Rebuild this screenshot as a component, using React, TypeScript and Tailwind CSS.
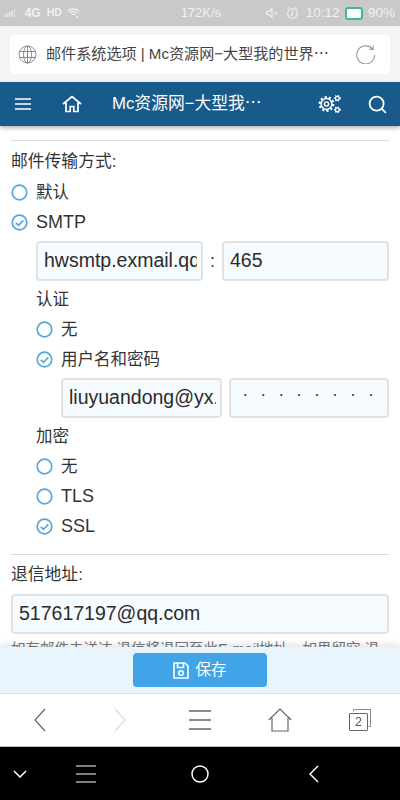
import React from 'react';
import { Search } from 'lucide-react';

const cjk = '"Liberation Sans", "Noto Sans CJK SC", sans-serif';

const Radio = ({ checked }: { checked?: boolean }) => (
  <svg width="17" height="17" viewBox="0 0 17 17" fill="none" className="shrink-0">
    <circle cx="8.5" cy="8.5" r="7.3" stroke="#5aa6da" strokeWidth="1.7" />
    {checked && <path d="M4.8 8.8l2.7 2.6 4.8-5" stroke="#5aa6da" strokeWidth="1.6" />}
  </svg>
);

const Option = ({ label, checked, latin }: { label: string; checked?: boolean; latin?: boolean }) => (
  <div className="flex h-[30px] items-center gap-[8px]">
    <Radio checked={checked} />
    <span className={latin ? 'text-[18px]' : 'text-[16.5px]'}>{label}</span>
  </div>
);

// the value is clipped inside the padding, so the wrapper holds the gutter
const Field = ({ value, className, inner = '' }: { value: string; className: string; inner?: string }) => (
  <div className={`h-[40px] rounded-[4px] border-2 border-[#dfe3e6] bg-[#f6fbff] pl-[6px] pr-[4px] text-[19.5px] leading-[35px] text-[#2b2b2b] ${className}`}>
    <div className={`h-full overflow-hidden whitespace-nowrap ${inner}`}>{value}</div>
  </div>
);

const GearIcon = () => (
  <svg width="23" height="18" viewBox="0 0 23 18" fill="none" stroke="white">
    <circle cx="8.5" cy="9" r="5.4" strokeWidth="1.5" />
    <circle cx="8.5" cy="9" r="6.8" strokeWidth="2.2" strokeDasharray="2.2 2.07" />
    <circle cx="8.5" cy="9" r="2.1" strokeWidth="1.4" />
    <circle cx="19.3" cy="3.2" r="1.9" strokeWidth="1.3" />
    <circle cx="19.3" cy="3.2" r="2.7" strokeWidth="1.4" strokeDasharray="1.2 1.35" />
    <circle cx="19.3" cy="14.8" r="1.9" strokeWidth="1.3" />
    <circle cx="19.3" cy="14.8" r="2.7" strokeWidth="1.4" strokeDasharray="1.2 1.35" />
  </svg>
);

export default function App() {
  return (
    <div className="flex h-[800px] w-[400px] flex-col overflow-hidden bg-white text-[#333]" style={{ fontFamily: cjk }}>
      {/* system status bar */}
      <div className="flex h-[26px] shrink-0 items-center bg-[#c9c9c9] pl-[4px] pr-[5px] text-[12px] text-[#f1f1f1]">
        <svg width="17" height="10" viewBox="0 0 17 10" fill="#f1f1f1">
          <rect x="0" y="7" width="1.6" height="3" /><rect x="3" y="5.5" width="1.6" height="4.5" /><rect x="6" y="4" width="1.6" height="6" /><rect x="9" y="2" width="1.6" height="8" /><rect x="12" y="0" width="1.6" height="10" opacity=".6" />
        </svg>
        <span className="ml-[7px] text-[12px] font-bold">4G</span>
        <span className="ml-[6px] text-[10.5px] font-bold">HD</span>
        <svg width="16" height="14" viewBox="0 0 16 14" fill="none" stroke="#f4f4f4" strokeWidth="1.5" className="ml-[5px]">
          <path d="M1 4.5c4-3.6 10-3.6 14 0M3.2 7c2.8-2.4 6.8-2.4 9.6 0M5.5 9.5c1.4-1.1 3.6-1.1 5 0" />
          <circle cx="12.5" cy="12" r="1.2" fill="#f4f4f4" stroke="none" />
        </svg>
        <span className="ml-[101px] text-[13px]">172K/s</span>
        <svg width="16" height="14" viewBox="0 0 16 14" fill="none" stroke="#f4f4f4" strokeWidth="1.3" className="ml-[45px]">
          <path d="M1 5v4h2.5l4 3.5v-11L3.5 5zM11 6l3 3M14 6l-3 3" />
        </svg>
        <svg width="16" height="16" viewBox="0 0 16 16" fill="none" stroke="#f4f4f4" strokeWidth="1.3" className="ml-[7px]">
          <circle cx="8" cy="8.5" r="6" /><path d="M8 5v4l-2 2.5M2 3l2-2M14 3l-2-2" />
        </svg>
        <span className="ml-[7px] text-[13.5px]">10:12</span>
        <div className="ml-[5px] h-[13px] w-[22px] rounded-[3px] border-2 border-[#3fb894] bg-white" />
        <span className="ml-[5px] text-[13.5px]">90%</span>
      </div>

      {/* browser address bar */}
      <div className="flex h-[56px] shrink-0 items-center bg-[#f5f5f5] px-[10px]">
        <div className="flex h-[39px] w-full items-center rounded-[4px] bg-white pl-[8px]">
          <svg width="19" height="19" viewBox="0 0 19 19" fill="none" stroke="#8a8a8a" strokeWidth="1">
            <circle cx="9.5" cy="9.5" r="8.5" /><ellipse cx="9.5" cy="9.5" rx="4" ry="8.5" />
            <path d="M9.5 1v17M1.5 6.5h16M1.5 12.5h16" />
          </svg>
          <span className="ml-[9px] whitespace-nowrap text-[15.1px] text-[#444]">邮件系统选项 | Mc资源网−大型我的世界⋯</span>
          <svg width="20" height="20" viewBox="0 0 20 20" fill="none" stroke="#9a9a9a" strokeWidth="1.1" className="ml-auto mr-[14px]">
            <path d="M16.5 5a9 9 0 1 0 2.2 6M17.2 1.5V5.4h-3.9" />
          </svg>
        </div>
      </div>

      {/* site nav */}
      <div className="relative z-10 flex h-[44px] shrink-0 items-center bg-[#175a8b] pr-[12px] text-white shadow-[0_2px_4px_rgba(0,0,0,0.3)]">
        <svg width="16" height="14" viewBox="0 0 16 14" stroke="white" strokeWidth="1.7" className="ml-[15px]">
          <path d="M0 2h16M0 7h16M0 12h16" />
        </svg>
        <svg width="20" height="18" viewBox="0 0 20 18" fill="none" stroke="white" strokeWidth="1.7" className="ml-[31px]">
          <path d="M1 9l9-7.5L19 9M4 7.5V16.5h4.2v-5h3.6v5H16V7.5" />
        </svg>
        <span className="ml-[30px] whitespace-nowrap text-[16.8px]">Mc资源网−大型我⋯</span>
        <div className="ml-auto flex"><GearIcon /></div>
        <Search size={21} strokeWidth={2} className="ml-[26px]" />
      </div>

      {/* options form */}
      <div className="min-h-0 flex-1 overflow-hidden px-[11px] pt-[14px]">
        <div className="h-[1px] bg-[#ddd]" />
        <div className="mt-[9px] h-[24px] text-[16.8px] leading-[24px]">邮件传输方式:</div>
        <div className="mt-[3px]">
          <Option label="默认" />
          <Option label="SMTP" checked latin />
        </div>
        <div className="ml-[25px]">
          <div className="mt-[4px] flex items-center">
            <Field value="hwsmtp.exmail.qq.com" className="w-[167px]" />
            <span className="w-[19px] text-center text-[18px]">:</span>
            <Field value="465" className="w-[167px]" />
          </div>
          <div className="mt-[6px] h-[24px] text-[16.5px] leading-[24px]">认证</div>
          <div className="mt-[3px]">
            <Option label="无" />
            <Option label="用户名和密码" checked />
          </div>
          <div className="ml-[25px] mt-[4px] flex gap-[7px]">
            <Field value="liuyuandong@yx.com" className="w-[161px]" />
            <Field value="••••••••" className="w-0 min-w-0 flex-1" inner="pl-[7px] text-[7px] leading-[30px] tracking-[15.5px]" />
          </div>
          <div className="mt-[6px] h-[24px] text-[16.5px] leading-[24px]">加密</div>
          <div className="mt-[3px]">
            <Option label="无" />
            <Option label="TLS" latin />
            <Option label="SSL" checked latin />
          </div>
        </div>
        <div className="mt-[13px] h-[1px] bg-[#d8d8d8]" />
        <div className="mt-[8px] h-[24px] text-[16.8px] leading-[24px]">退信地址:</div>
        <Field value="517617197@qq.com" className="mt-[7px] w-full" />
        <div className="mt-[5px] whitespace-nowrap text-[14.5px] leading-[20px] text-[#777]">如有邮件未送达,退信将退回至此E-mail地址。如果留空,退</div>
      </div>

      {/* save bar */}
      <div className="relative z-10 flex h-[47px] shrink-0 items-center justify-center border-b border-[#d8e4ec] bg-[#e9f5fd] shadow-[0_-3px_6px_rgba(0,0,0,0.1)]">
        <div className="flex h-[34px] w-[134px] items-center justify-center gap-[6px] rounded-[4px] bg-[#42a4e8] text-[15.5px] text-white">
          <svg width="16" height="17" viewBox="0 0 16 17" fill="none" stroke="white" strokeWidth="1.6">
            <path d="M1 1h11l3 3v12H1zM4.5 1v4.5h6V1" /><circle cx="8" cy="11" r="2.3" />
          </svg>
          保存
        </div>
      </div>

      {/* browser toolbar */}
      <div className="flex h-[53px] shrink-0 items-center border-b border-[#bbb] bg-white">
        <div className="flex w-[80px] justify-center">
          <svg width="12" height="24" viewBox="0 0 12 24" fill="none" stroke="#666" strokeWidth="1.2"><path d="M11 1L1 12l10 11" /></svg>
        </div>
        <div className="flex w-[80px] justify-center">
          <svg width="12" height="24" viewBox="0 0 12 24" fill="none" stroke="#ddd" strokeWidth="1.2"><path d="M1 1l10 11L1 23" /></svg>
        </div>
        <div className="flex w-[80px] justify-center">
          <svg width="22" height="20" viewBox="0 0 22 20" stroke="#666" strokeWidth="1.4"><path d="M0 1h22M0 10h22M0 19h22" /></svg>
        </div>
        <div className="flex w-[80px] justify-center">
          <svg width="24" height="24" viewBox="0 0 24 24" fill="none" stroke="#666" strokeWidth="1.2"><path d="M0.8 12L12 1l11.2 11M4 10v13h16V10" /></svg>
        </div>
        <div className="flex w-[80px] justify-center">
          <div className="relative flex h-[22px] w-[22px] items-end">
            <svg width="22" height="22" viewBox="0 0 22 22" fill="none" stroke="#888" strokeWidth="1" className="absolute left-0 top-0">
              <path d="M4.5 2.5V.5h17v17h-2" />
            </svg>
            <div className="h-[18px] w-[19px] rounded-[1px] border border-[#666] bg-white text-center text-[12.5px] leading-[16px] text-[#555]">2</div>
          </div>
        </div>
      </div>

      {/* android nav keys */}
      <div className="flex h-[53px] shrink-0 items-center bg-black">
        <svg width="14" height="8" viewBox="0 0 14 8" fill="none" stroke="white" strokeWidth="1.5" className="ml-[13px]"><path d="M1 1l6 6 6-6" /></svg>
        <svg width="20" height="18" viewBox="0 0 20 18" stroke="white" strokeWidth="1.2" className="ml-[49px]"><path d="M0 1h20M0 9h20M0 17h20" /></svg>
        <svg width="18" height="18" viewBox="0 0 18 18" fill="none" stroke="white" strokeWidth="1.5" className="ml-[95px]"><circle cx="9" cy="9" r="8" /></svg>
        <svg width="10" height="18" viewBox="0 0 10 18" fill="none" stroke="white" strokeWidth="1.5" className="ml-[100px]"><path d="M9 1L1 9l8 8" /></svg>
      </div>
    </div>
  );
}
